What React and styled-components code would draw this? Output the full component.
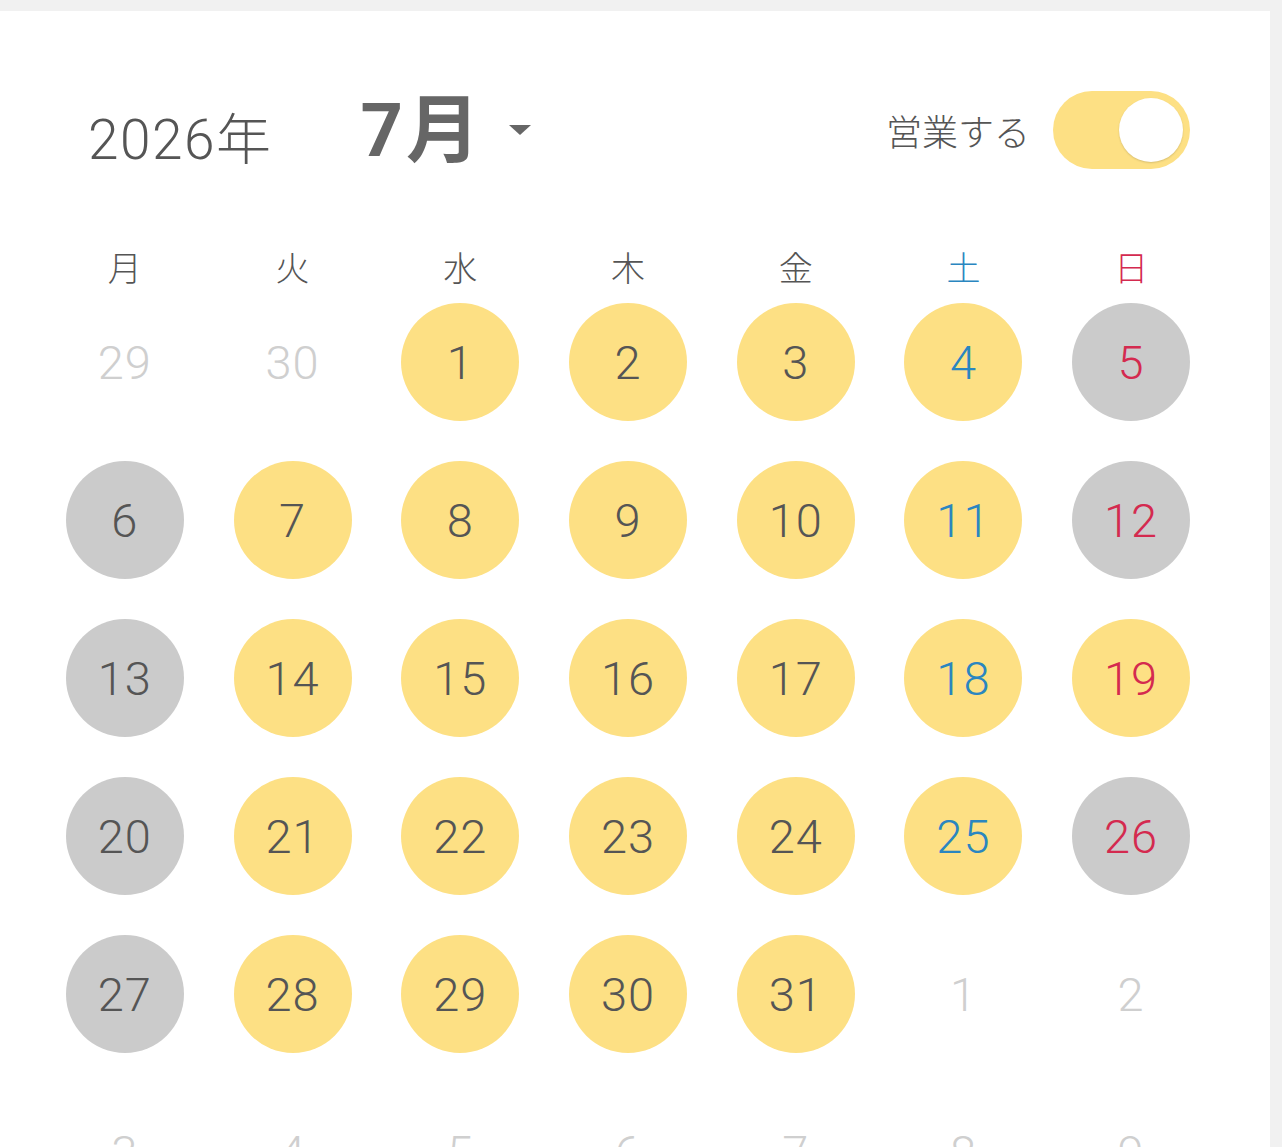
import React, { useState } from 'react';
import styled, { createGlobalStyle } from 'styled-components';

const GlobalStyle = createGlobalStyle`
  html, body {
    margin: 0;
    padding: 0;
    background: #f1f1f1;
    font-family: "Noto Sans CJK JP", "Noto Sans", sans-serif;
    color: #555;
  }
`;

const digitFont = `Roboto, "Noto Sans CJK JP", sans-serif`;

const Page = styled.div`
  padding: 11px 12px 0 0;
  min-height: 1147px;
  box-sizing: border-box;
`;

const Card = styled.div`
  background: #fff;
  padding-top: 80px;
  min-height: 1300px;
`;

const Header = styled.div`
  display: flex;
  align-items: center;
  height: 78px;
  padding: 0 80px 0 88px;
`;

const Year = styled.div`
  font-family: ${digitFont};
  font-size: 55px;
  font-weight: 300;
  letter-spacing: 1.5px;
  color: #555;
  margin-top: 10px;
`;

const MonthPicker = styled.button`
  display: flex;
  align-items: center;
  gap: 26px;
  margin-left: 88px;
  padding: 0;
  border: none;
  background: none;
  font-family: ${digitFont};
  cursor: pointer;
`;

const Month = styled.span`
  font-size: 74px;
  font-weight: 700;
  letter-spacing: 3px;
  color: #666;
  line-height: 1;
  margin-top: 2px;
`;

const Caret = styled.span`
  width: 0;
  height: 0;
  border-left: 11px solid transparent;
  border-right: 11px solid transparent;
  border-top: 10px solid #666;
`;

const OpenSwitch = styled.label`
  display: flex;
  align-items: center;
  gap: 23px;
  margin-left: auto;
  cursor: pointer;
`;

const SwitchLabel = styled.span`
  font-size: 36px;
  font-weight: 300;
  color: #555;
`;

const Track = styled.span`
  position: relative;
  width: 137px;
  height: 78px;
  border-radius: 39px;
  background: ${p => (p.$on ? '#fde084' : '#cbcbcb')};
  transition: background 0.2s ease;
`;

const Knob = styled.span`
  position: absolute;
  top: 7px;
  left: ${p => (p.$on ? '66px' : '7px')};
  width: 64px;
  height: 64px;
  border-radius: 50%;
  background: #fff;
  box-shadow: 0 1px 2px rgba(0, 0, 0, 0.15);
  transition: left 0.2s ease;
`;

const Grid = styled.div`
  display: grid;
  grid-template-columns: repeat(7, 1fr);
  grid-auto-rows: 158px;
  padding: 0 55px 0 41px;
`;

const WeekRow = styled(Grid)`
  grid-auto-rows: 32px;
  margin-top: 82px;
`;

const WeekDay = styled.div`
  display: flex;
  align-items: center;
  justify-content: center;
  font-size: 34px;
  font-weight: 300;
  line-height: 1;
  color: ${p => (p.$tone === 'sat' ? '#2a86c0' : p.$tone === 'sun' ? '#d42a4f' : '#555')};
`;

const Cell = styled.div`
  display: flex;
  align-items: center;
  justify-content: center;
`;

const Day = styled.div`
  width: 118px;
  height: 118px;
  border-radius: 50%;
  display: flex;
  align-items: center;
  justify-content: center;
  font-family: ${digitFont};
  font-size: 47px;
  font-weight: 300;
  letter-spacing: 1px;
  background: ${p => (p.$state === 'open' ? '#fde084' : p.$state === 'closed' ? '#cbcbcb' : 'transparent')};
  color: ${p =>
    p.$state === 'out' ? '#cfcfcf' : p.$tone === 'sat' ? '#2a86c0' : p.$tone === 'sun' ? '#d42a4f' : '#555'};
`;

const weekdays = ['月', '火', '水', '木', '金', '土', '日'];
const closedDays = [5, 6, 12, 13, 20, 26, 27];

const buildDays = () => {
  const cells = [29, 30].map(d => ({ d, state: 'out' }));
  for (let d = 1; d <= 31; d++) {
    cells.push({ d, state: closedDays.includes(d) ? 'closed' : 'open' });
  }
  for (let d = 1; d <= 9; d++) cells.push({ d, state: 'out' });
  return cells;
};

const toneOf = i => (i % 7 === 5 ? 'sat' : i % 7 === 6 ? 'sun' : 'normal');

const App = () => {
  const [open, setOpen] = useState(true);
  const days = buildDays();

  return (
    <Page>
      <GlobalStyle />
      <Card>
        <Header>
          <Year>2026年</Year>
          <MonthPicker>
            <Month>7月</Month>
            <Caret />
          </MonthPicker>
          <OpenSwitch onClick={() => setOpen(!open)}>
            <SwitchLabel>営業する</SwitchLabel>
            <Track $on={open}>
              <Knob $on={open} />
            </Track>
          </OpenSwitch>
        </Header>

        <WeekRow>
          {weekdays.map((w, i) => (
            <WeekDay key={w} $tone={toneOf(i)}>{w}</WeekDay>
          ))}
        </WeekRow>

        <Grid>
          {days.map((c, i) => (
            <Cell key={i}>
              <Day $state={c.state} $tone={toneOf(i)}>{c.d}</Day>
            </Cell>
          ))}
        </Grid>
      </Card>
    </Page>
  );
};

export default App;
